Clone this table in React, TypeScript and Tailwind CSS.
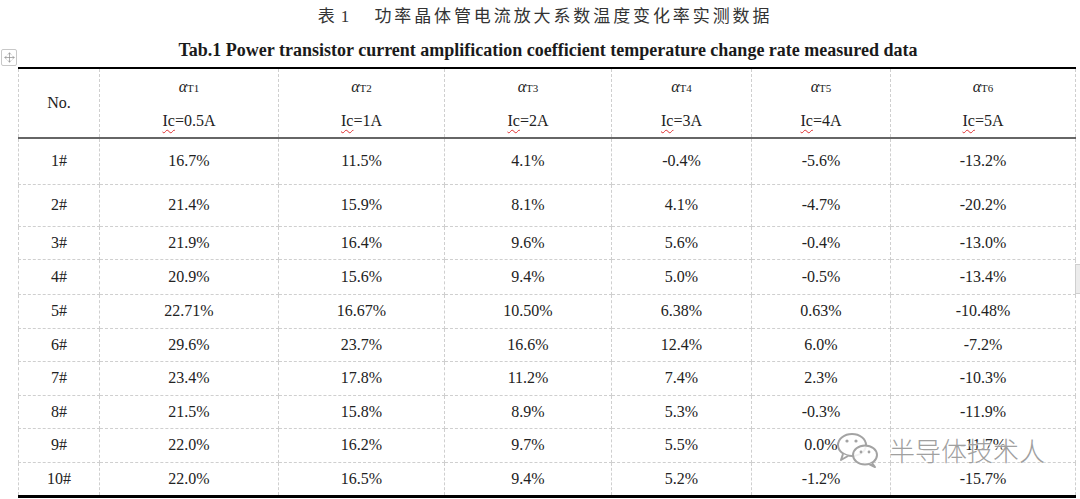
import { Move } from "lucide-react";

const cols = [81, 179, 166, 167, 140, 139, 185];

const heads = [
  { t: "1", ic: "0.5A" },
  { t: "2", ic: "1A" },
  { t: "3", ic: "2A" },
  { t: "4", ic: "3A" },
  { t: "5", ic: "4A" },
  { t: "6", ic: "5A" },
];

const rows: { no: string; h: number; v: string[] }[] = [
  { no: "1#", h: 46, v: ["16.7%", "11.5%", "4.1%", "-0.4%", "-5.6%", "-13.2%"] },
  { no: "2#", h: 42, v: ["21.4%", "15.9%", "8.1%", "4.1%", "-4.7%", "-20.2%"] },
  { no: "3#", h: 33, v: ["21.9%", "16.4%", "9.6%", "5.6%", "-0.4%", "-13.0%"] },
  { no: "4#", h: 35, v: ["20.9%", "15.6%", "9.4%", "5.0%", "-0.5%", "-13.4%"] },
  { no: "5#", h: 34, v: ["22.71%", "16.67%", "10.50%", "6.38%", "0.63%", "-10.48%"] },
  { no: "6#", h: 33, v: ["29.6%", "23.7%", "16.6%", "12.4%", "6.0%", "-7.2%"] },
  { no: "7#", h: 34, v: ["23.4%", "17.8%", "11.2%", "7.4%", "2.3%", "-10.3%"] },
  { no: "8#", h: 33, v: ["21.5%", "15.8%", "8.9%", "5.3%", "-0.3%", "-11.9%"] },
  { no: "9#", h: 34, v: ["22.0%", "16.2%", "9.7%", "5.5%", "0.0%", "-11.7%"] },
  { no: "10#", h: 34, v: ["22.0%", "16.5%", "9.4%", "5.2%", "-1.2%", "-15.7%"] },
];

function WeChatMark() {
  return (
    <svg width="46" height="38" viewBox="0 0 46 38" fill="none">
      <ellipse cx="17" cy="14" rx="14" ry="11" fill="white" fillOpacity="0.6" stroke="#a3a3a3" strokeWidth="2" />
      <path d="M8 23 L6 29 L13 25" fill="white" stroke="#a3a3a3" strokeWidth="2" strokeLinejoin="round" />
      <circle cx="12" cy="10" r="1.6" fill="#a3a3a3" />
      <circle cx="21" cy="10" r="1.6" fill="#a3a3a3" />
      <ellipse cx="30" cy="24" rx="12" ry="9.5" fill="white" fillOpacity="0.85" stroke="#a3a3a3" strokeWidth="2" />
      <path d="M37 32 L40 36 L34 33" fill="white" stroke="#a3a3a3" strokeWidth="2" strokeLinejoin="round" />
      <circle cx="26" cy="21" r="1.4" fill="#a3a3a3" />
      <circle cx="34" cy="21" r="1.4" fill="#a3a3a3" />
    </svg>
  );
}

export default function App() {
  const cell = "border border-dashed border-[#cfcfcf] text-center align-middle p-0";
  const headCell = `${cell} font-normal [border-top:2px_solid_#000]! [border-bottom:2px_solid_#666]!`;
  const lastCell = "[border-bottom:3px_solid_#000]!";
  return (
    <div
      className="relative w-[1080px] h-[499px] overflow-hidden bg-white text-[#222]"
      style={{ fontFamily: '"Liberation Serif", "Noto Sans CJK SC", serif' }}
    >
      <div className="h-[33px] flex items-center justify-center text-[17px] text-[#333] pt-[1px] pl-[10px]">
        <span className="mr-[24px] tracking-[1px]">表 1</span>
        <span className="tracking-[2.9px]">功率晶体管电流放大系数温度变化率实测数据</span>
      </div>
      <div className="relative h-[34px] flex items-center justify-center text-[18px] font-bold text-[#1a1a1a] pl-[16px]">
        <div className="absolute left-[1px] top-[16px] w-[16px] h-[17px] border border-[#c8c8c8] rounded-[2px] flex items-center justify-center bg-white">
          <Move size={11} strokeWidth={1.5} className="text-[#8a8a8a]" />
        </div>
        Tab.1 Power transistor current amplification coefficient temperature change rate measured data
      </div>
      <table className="ml-[18px] w-[1057px] border-collapse table-fixed text-[16px]">
        <colgroup>
          {cols.map((w, i) => (
            <col key={i} style={{ width: w }} />
          ))}
        </colgroup>
        <thead>
          <tr className="h-[70px]">
            <th className={headCell}>No.</th>
            {heads.map((h) => (
              <th key={h.t} className={headCell}>
                <div className="flex flex-col items-center gap-[11px] pt-[2px]">
                  <span className="leading-[22px]">
                    <i>α</i>
                    <span className="text-[11px]">T{h.t}</span>
                  </span>
                  <span className="leading-[22px]">
                    <span className="underline decoration-wavy decoration-[#e03030] decoration-1 underline-offset-[3px]">Ic</span>
                    ={h.ic}
                  </span>
                </div>
              </th>
            ))}
          </tr>
        </thead>
        <tbody>
          {rows.map((r, ri) => {
            const last = ri === rows.length - 1 ? lastCell : "";
            return (
              <tr key={r.no} style={{ height: r.h }}>
                <td className={`${cell} ${last}`}>{r.no}</td>
                {r.v.map((v, i) => (
                  <td key={i} className={`${cell} ${last}`}>
                    {v}
                  </td>
                ))}
              </tr>
            );
          })}
        </tbody>
      </table>
      <div className="absolute left-[1075px] top-[264px] w-[5px] h-[30px] bg-[#ececec] border-l border-t border-b border-[#cfcfcf]" />
      <div className="absolute left-[835px] top-[430px] flex items-center gap-[8px]">
        <WeChatMark />
        <span
          className="text-[26px] text-[#a0a0a0]"
          style={{
            fontFamily: '"Noto Sans CJK SC", sans-serif',
            textShadow: "0 0 2px #fff, 0 0 2px #fff",
            fontWeight: 300,
          }}
        >
          半导体技术人
        </span>
      </div>
    </div>
  );
}
